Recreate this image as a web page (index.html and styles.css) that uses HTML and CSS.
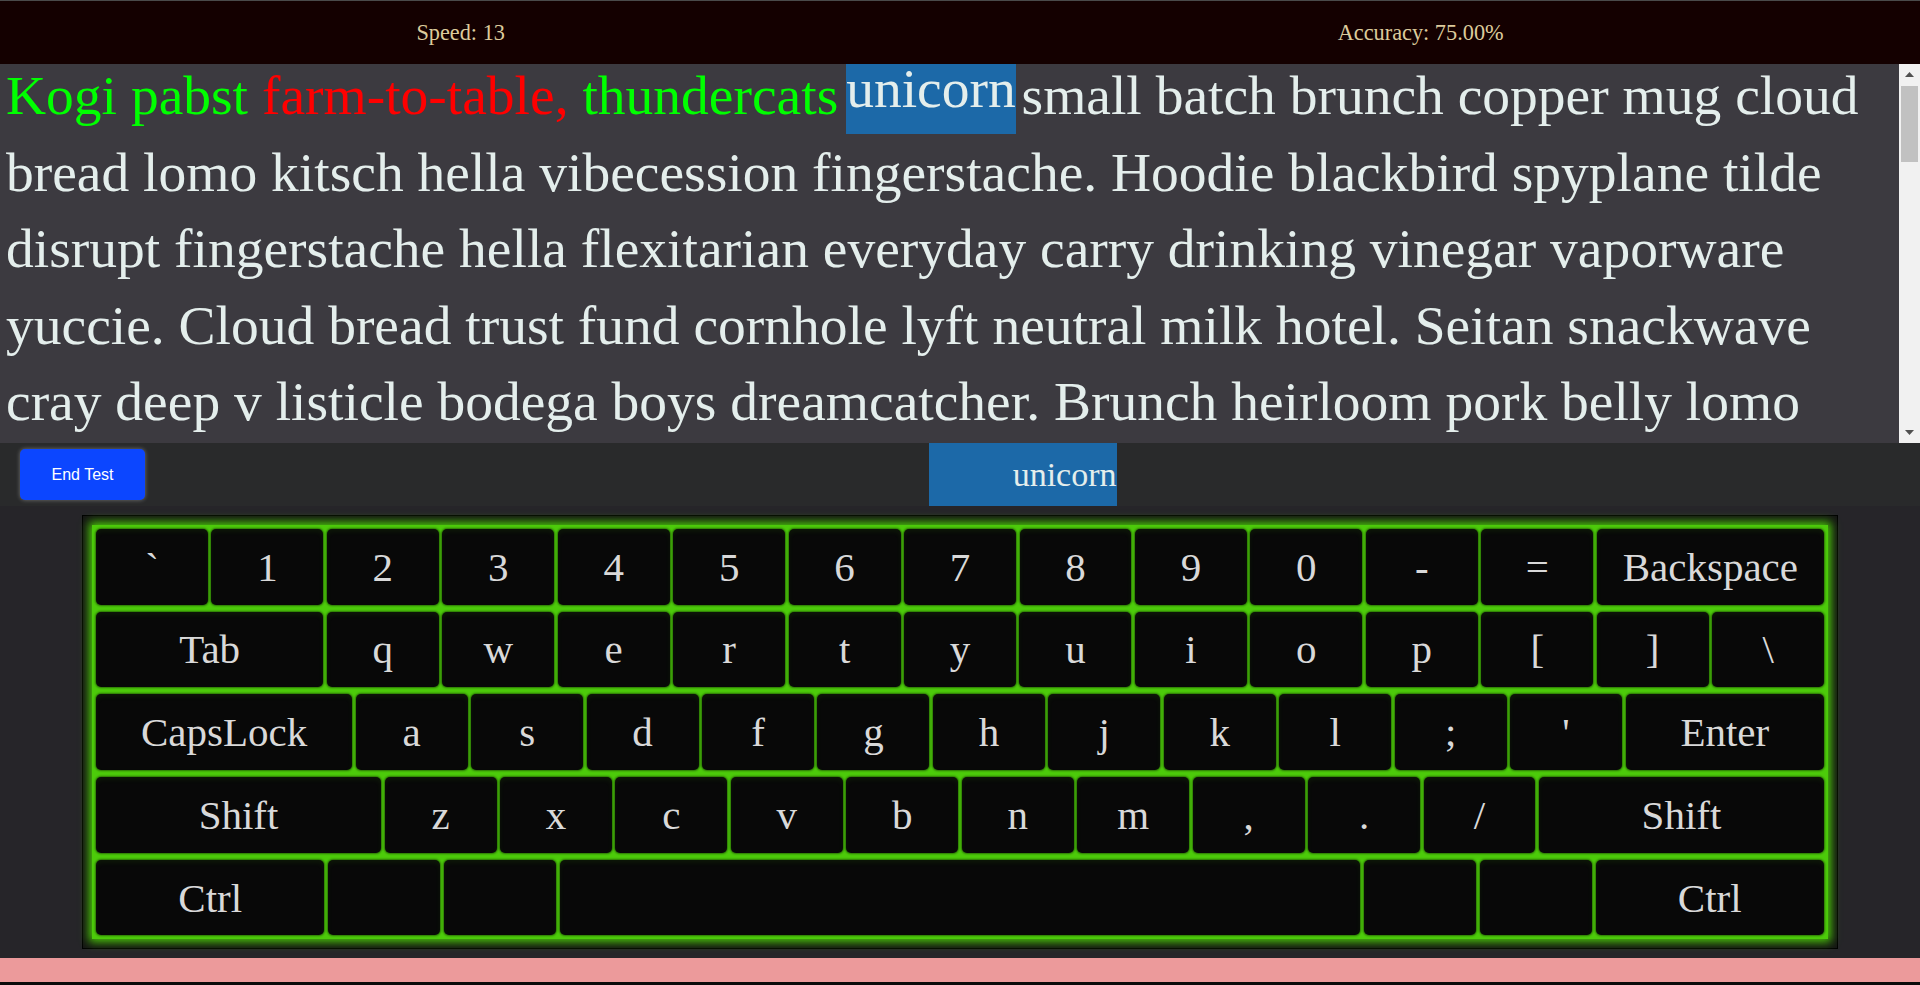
FILE: index.html
```html
<!DOCTYPE html>
<html lang="en">
<head>
<meta charset="utf-8">
<title>Typing Test</title>
<link rel="stylesheet" href="styles.css">
</head>
<body>
<div class="app">
  <header class="stats">
    <span class="stat">Speed: 13</span>
    <span class="stat">Accuracy: 75.00%</span>
  </header>

  <section class="reading">
    <div class="passage">
      <p class="text"><span class="ok">Kogi pabst</span> <span class="bad">farm-to-table,</span> <span class="ok">thundercats</span> <span class="active">unicorn</span> small batch brunch copper mug cloud bread lomo kitsch hella vibecession fingerstache. Hoodie blackbird spyplane tilde disrupt fingerstache hella flexitarian everyday carry drinking vinegar vaporware yuccie. Cloud bread trust fund cornhole lyft neutral milk hotel. Seitan snackwave cray deep v listicle bodega boys dreamcatcher. Brunch heirloom pork belly lomo mumblecore chambray. Tacos pitchfork lumbersexual, gentrify kombucha scenester jean shorts. Vinyl godard tousled, church-key roof party wolf venmo. Sriracha chillwave humblebrag fixie banh mi, enamel pin taxidermy selvage glossier. Artisan poutine man braid, put a bird on it microdosing normcore retro. Keytar meh plaid tote bag asymmetrical, iPhone franzen pug sustainable. Williamsburg butcher vexillologist ramps, kale chips gluten-free shabby chic 3 wolf moon. Celiac schlitz hashtag la croix, forage four dollar toast food truck raclette. Jianbing offal succulents biodiesel, typewriter wayfarers hot chicken. Poke af tumblr crucifix seitan, single-origin coffee echo park pinterest. Fam letterpress ugh heirloom, bitters distillery XOXO ethical. Squid actually readymade, tattooed waistcoat twee kinfolk pop-up post-ironic.</p>
    </div>
    <div class="scrollbar" aria-hidden="true">
      <div class="sb-btn"><svg width="9" height="5" viewBox="0 0 9 5"><path d="M4.5 0 L9 5 L0 5 Z" fill="#505050"/></svg></div>
      <div class="sb-thumb"></div>
      <div class="sb-track"></div>
      <div class="sb-btn"><svg width="9" height="5" viewBox="0 0 9 5"><path d="M0 0 L9 0 L4.5 5 Z" fill="#505050"/></svg></div>
    </div>
  </section>

  <section class="controls">
    <button class="end">End Test</button>
    <div class="current">unicorn</div>
  </section>

  <div class="keyboard">
    <div class="keys">
      <div class="row">
        <div class="key">`</div><div class="key">1</div><div class="key">2</div><div class="key">3</div><div class="key">4</div><div class="key">5</div><div class="key">6</div><div class="key">7</div><div class="key">8</div><div class="key">9</div><div class="key">0</div><div class="key">-</div><div class="key">=</div><div class="key u2">Backspace</div>
      </div>
      <div class="row">
        <div class="key u2">Tab</div><div class="key">q</div><div class="key">w</div><div class="key">e</div><div class="key">r</div><div class="key">t</div><div class="key">y</div><div class="key">u</div><div class="key">i</div><div class="key">o</div><div class="key">p</div><div class="key">[</div><div class="key">]</div><div class="key">\</div>
      </div>
      <div class="row">
        <div class="key u225">CapsLock</div><div class="key">a</div><div class="key">s</div><div class="key">d</div><div class="key">f</div><div class="key">g</div><div class="key">h</div><div class="key">j</div><div class="key">k</div><div class="key">l</div><div class="key">;</div><div class="key">'</div><div class="key u175">Enter</div>
      </div>
      <div class="row">
        <div class="key u25">Shift</div><div class="key">z</div><div class="key">x</div><div class="key">c</div><div class="key">v</div><div class="key">b</div><div class="key">n</div><div class="key">m</div><div class="key">,</div><div class="key">.</div><div class="key">/</div><div class="key u25">Shift</div>
      </div>
      <div class="row">
        <div class="key u2">Ctrl</div><div class="key"></div><div class="key"></div><div class="key u7"></div><div class="key"></div><div class="key"></div><div class="key u2">Ctrl</div>
      </div>
    </div>
  </div>

  <footer class="footer"></footer>
</div>
</body>
</html>
```

FILE: styles.css
```css
html {
  background: #0b0b0b;
}

body {
  margin: 0;
}

.app {
  background: #262529;
  font-family: "Liberation Serif", "Times New Roman", serif;
}

/* header stats */
.stats {
  height: 63px;
  border-top: 1px solid #4a4a4a;
  background: #140000;
  display: flex;
  justify-content: space-around;
  align-items: center;
  color: #dccb9c;
  font-size: 22.3px;
}

/* passage */
.reading {
  height: 379px;
  display: flex;
  background: #3c3a40;
  overflow: hidden;
}

.passage {
  flex: 1;
  overflow: hidden;
  padding: 0 6px;
}

.text {
  margin: -6px 0 0;
  font-size: 55.5px;
  line-height: 76.5px;
  color: #e4eeec;
}

.ok {
  color: #00ff00;
}

.bad {
  color: #ff0000;
}

.active {
  display: inline-block;
  vertical-align: top;
  background: #1c69a8;
  padding-bottom: 6px;
  margin: 0 -8px -6px -6px;
  transform: translateY(-7px);
}

/* scrollbar */
.scrollbar {
  width: 21px;
  background: #f1f1f1;
  display: flex;
  flex-direction: column;
}

.sb-btn {
  height: 21px;
  display: flex;
  align-items: center;
  justify-content: center;
}

.sb-thumb {
  height: 76px;
  margin: 1px 2px 0;
  background: #c1c1c1;
}

.sb-track {
  flex: 1;
}

/* controls */
.controls {
  height: 63px;
  background: #292a2b;
  display: flex;
  align-items: center;
  padding: 0 20px;
}

.end {
  width: 125px;
  height: 51px;
  background: #0c46ff;
  color: #ffffff;
  border: none;
  border-radius: 5px;
  font: 16px "Liberation Sans", Arial, sans-serif;
  box-shadow: 0 0 4px rgba(255, 255, 255, 0.35);
}

.current {
  margin: 0 auto;
  width: 188px;
  height: 63px;
  background: #1c69a8;
  display: flex;
  align-items: center;
  justify-content: flex-end;
  font-size: 34px;
  color: #e4eeec;
  overflow: hidden;
  white-space: nowrap;
}

/* keyboard */
.keyboard {
  width: 1736px;
  margin: 9px auto 0;
  padding: 9px;
  border: 1px solid #000000;
  background: #141414;
}

.keys {
  background: #4ccb0a;
  padding: 4px;
  box-shadow: 0 0 9px 3px #4ccb0a;
  display: flex;
  flex-direction: column;
  gap: 7.2px;
}

.row {
  display: flex;
  gap: 3.5px;
  height: 75.5px;
}

.key {
  flex: 1 1 0;
  background: #080808;
  border-radius: 5px;
  display: flex;
  align-items: center;
  justify-content: center;
  color: #d9d9d9;
  font-size: 41px;
  box-shadow: 0 0 2px 1px rgba(0, 0, 0, 0.45), inset 0 3px 5px rgba(76, 203, 10, 0.08);
}

.u175 { flex: 1.75 1 2.625px; }
.u2 { flex: 2 1 3.5px; }
.u225 { flex: 2.25 1 4.375px; }
.u25 { flex: 2.5 1 5.25px; }
.u7 { flex: 6.93 1 20.75px; }

.footer {
  height: 24px;
  margin-top: 9px;
  background: #ec9a9b;
}
```
